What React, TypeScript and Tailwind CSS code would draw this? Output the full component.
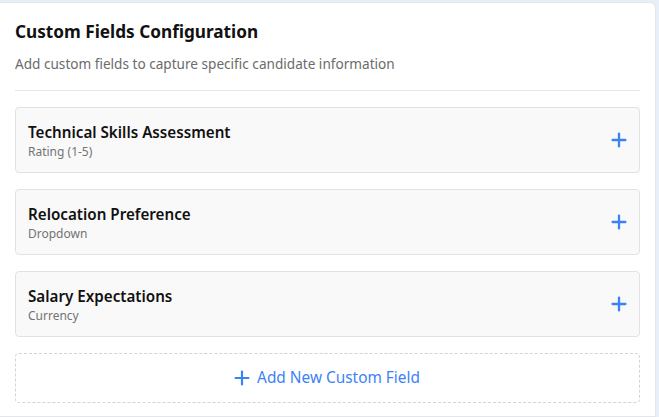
import { Plus } from "lucide-react";

const fields = [
  { name: "Technical Skills Assessment", type: "Rating (1-5)" },
  { name: "Relocation Preference", type: "Dropdown" },
  { name: "Salary Expectations", type: "Currency" },
];

const App = () => {
  return (
    <div className="h-screen overflow-hidden bg-[#e9eff9] pt-[2px] pr-[3px] font-['Noto_Sans',sans-serif]">
      <div className="h-full w-[656px] rounded-tr-md border border-l-0 border-[#e3e6ea] bg-white px-[15px] pt-[15px]">
        <div className="border-b border-[#e5e7eb] pb-4">
          <h2 className="text-[17.2px] font-bold leading-7 text-[#111]">Custom Fields Configuration</h2>
          <p className="mt-2 text-[13.6px] leading-5 text-[#6b6b6b]">
            Add custom fields to capture specific candidate information
          </p>
        </div>

        <div className="mt-4 flex flex-col gap-4">
          {fields.map((f) => (
            <div
              key={f.name}
              className="flex items-center justify-between rounded border border-[#e2e2e2] bg-[#f9f9f9] py-3 pl-3 pr-[9px]"
            >
              <div>
                <div className="text-[15.2px] font-semibold leading-6 text-[#111]">{f.name}</div>
                <div className="text-[12px] leading-4 text-[#737373]">{f.type}</div>
              </div>
              <Plus className="h-[22px] w-[22px] text-[#3b82f6]" strokeWidth={2.5} />
            </div>
          ))}

          <button className="flex h-[50px] items-center justify-center gap-[4px] rounded border border-dashed border-[#d4d4d4] pr-[4px] text-[15.4px] text-[#3b82f6]">
            <Plus className="h-[22px] w-[22px]" strokeWidth={2.4} />
            Add New Custom Field
          </button>
        </div>
      </div>
    </div>
  );
};

export default App;
